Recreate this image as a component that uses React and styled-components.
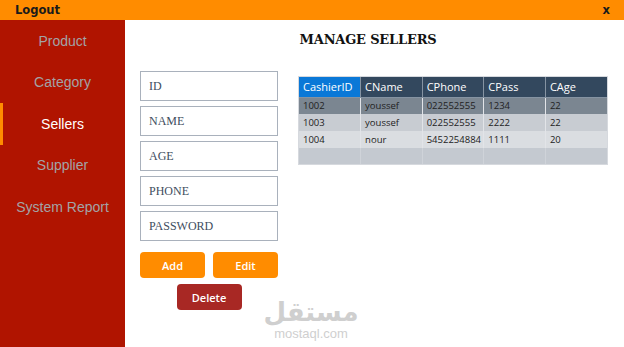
import React from "react";
import styled, { createGlobalStyle } from "styled-components";

const Global = createGlobalStyle`
  html, body { margin: 0; padding: 0; background: #ffffff; }
  body { width: 624px; height: 347px; overflow: hidden; font-family: "Liberation Sans", Arial, sans-serif; }
  * { box-sizing: border-box; }
`;

const Frame = styled.div`
  width: 624px;
  height: 347px;
  display: flex;
  flex-direction: column;
  position: relative;
  overflow: hidden;
`;

const TopBar = styled.div`
  height: 20px;
  flex: none;
  background: #ff8c00;
  display: flex;
  align-items: center;
  justify-content: space-between;
  padding: 0 14px 0 15px;
  font-family: "DejaVu Sans", Verdana, sans-serif;
  font-weight: bold;
  font-size: 11.5px;
  color: #1a1a1a;
`;

const Body = styled.div`
  flex: 1;
  display: flex;
`;

const Sidebar = styled.nav`
  width: 125px;
  flex: none;
  background: #b01400;
  display: flex;
  flex-direction: column;
`;

const NavItem = styled.div`
  height: 41.5px;
  display: flex;
  align-items: center;
  justify-content: center;
  font-family: "Liberation Sans", Arial, sans-serif;
  font-size: 14px;
  color: ${(p) => (p.$active ? "#ffffff" : "#a3a3a6")};
  border-left: 3px solid ${(p) => (p.$active ? "#ff8c00" : "transparent")};
  padding-right: 3px;
`;

const Main = styled.main`
  flex: 1;
  display: flex;
  flex-direction: column;
  padding: 11px 16px 0 15px;
`;

const Title = styled.h1`
  margin: 0;
  text-align: center;
  font-family: "DejaVu Serif", "Liberation Serif", serif;
  font-weight: bold;
  font-size: 13px;
  letter-spacing: -0.2px;
  color: #111;
  height: 18px;
  line-height: 18px;
  padding-right: 12px;
`;

const Content = styled.div`
  display: flex;
  gap: 20px;
  margin-top: 22px;
`;

const FormCol = styled.div`
  width: 138px;
  display: flex;
  flex-direction: column;
  gap: 5px;
`;

const Field = styled.div`
  height: 30px;
  border: 1px solid #a9b1bc;
  display: flex;
  align-items: center;
  padding-left: 8px;
  font-family: "Liberation Serif", "Times New Roman", serif;
  font-size: 12px;
  color: #3e4d5e;
  background: #fff;
`;

const ButtonRow = styled.div`
  display: flex;
  justify-content: ${(p) => (p.$center ? "center" : "space-between")};
  margin-top: ${(p) => p.$top}px;
`;

const Button = styled.div`
  width: 65px;
  height: 26px;
  border-radius: 4px;
  background: ${(p) => p.$color};
  color: #fff;
  display: flex;
  align-items: center;
  justify-content: center;
  font-family: "Open Sans", "Noto Sans", sans-serif;
  font-weight: 600;
  font-size: 11px;
`;

const TableWrap = styled.div`
  width: 310px;
  height: 89px;
  margin-top: 5px;
  background: #c4c9d0;
  border: 1px solid #d6d9de;
  display: flex;
  flex-direction: column;
`;

const Table = styled.table`
  width: 100%;
  border-collapse: collapse;
  table-layout: fixed;
  font-family: "Open Sans", "Noto Sans", sans-serif;
`;

const HeadRow = styled.tr`
  height: 20px;
`;

const Row = styled.tr`
  height: 17px;
`;

const Th = styled.th`
  background: ${(p) => (p.$sel ? "#0a78d7" : "#33485e")};
  color: #fff;
  font-weight: normal;
  font-size: 11px;
  text-align: left;
  padding: 0 4px;
  border-right: 1px solid #8593a2;
  border-bottom: 1px solid #8593a2;
  &:last-child { border-right: none; }
`;

const Td = styled.td`
  font-size: 9.5px;
  color: #222;
  padding: 0 4px;
  background: ${(p) => p.$bg};
  border-right: 1px solid #e2e4e8;
  white-space: nowrap;
  &:last-child { border-right: none; }
`;

const Filler = styled.div`
  display: flex;
  flex: 1;
`;

const FillerCell = styled.div`
  flex: 1;
  border-right: 1px solid #cfd3d9;
  &:last-child { border-right: none; }
`;

const Watermark = styled.div`
  position: absolute;
  left: 272px;
  top: 299px;
  width: 78px;
  display: flex;
  flex-direction: column;
  align-items: center;
  gap: 2px;
  color: #cfcfcf;
  pointer-events: none;
`;

const WmArabic = styled.div`
  font-family: "DejaVu Sans", "Noto Sans", sans-serif;
  font-weight: bold;
  font-size: 26px;
  line-height: 26px;
  height: 26px;
  direction: rtl;
`;

const WmLatin = styled.div`
  font-family: "Liberation Sans", Arial, sans-serif;
  font-size: 13px;
  line-height: 14px;
`;

const nav = ["Product", "Category", "Sellers", "Supplier", "System Report"];
const fields = ["ID", "NAME", "AGE", "PHONE", "PASSWORD"];
const cols = ["CashierID", "CName", "CPhone", "CPass", "CAge"];
const rows = [
  { bg: "#7b8691", cells: ["1002", "youssef", "022552555", "1234", "22"] },
  { bg: "#c8ccd2", cells: ["1003", "youssef", "022552555", "2222", "22"] },
  { bg: "#dadde1", cells: ["1004", "nour", "5452254884", "1111", "20"] },
];

export default function App() {
  return (
    <>
      <Global />
      <Frame>
        <TopBar>
          <span>Logout</span>
          <span>x</span>
        </TopBar>
        <Body>
          <Sidebar>
            {nav.map((n) => (
              <NavItem key={n} $active={n === "Sellers"}>{n}</NavItem>
            ))}
          </Sidebar>
          <Main>
            <Title>MANAGE SELLERS</Title>
            <Content>
              <FormCol>
                {fields.map((f) => (
                  <Field key={f}>{f}</Field>
                ))}
                <ButtonRow $top={6}>
                  <Button $color="#ff8c00">Add</Button>
                  <Button $color="#ff8c00">Edit</Button>
                </ButtonRow>
                <ButtonRow $center $top={1}>
                  <Button $color="#a82824">Delete</Button>
                </ButtonRow>
              </FormCol>
              <TableWrap>
                <Table>
                  <thead>
                    <HeadRow>
                      {cols.map((c, i) => (
                        <Th key={c} $sel={i === 0}>{c}</Th>
                      ))}
                    </HeadRow>
                  </thead>
                  <tbody>
                    {rows.map((r, ri) => (
                      <Row key={ri}>
                        {r.cells.map((c, ci) => (
                          <Td key={ci} $bg={r.bg}>{c}</Td>
                        ))}
                      </Row>
                    ))}
                  </tbody>
                </Table>
                <Filler>
                  {cols.map((c) => (
                    <FillerCell key={c} />
                  ))}
                </Filler>
              </TableWrap>
            </Content>
          </Main>
        </Body>
        <Watermark>
          <WmArabic>مستقل</WmArabic>
          <WmLatin>mostaql.com</WmLatin>
        </Watermark>
      </Frame>
    </>
  );
}
